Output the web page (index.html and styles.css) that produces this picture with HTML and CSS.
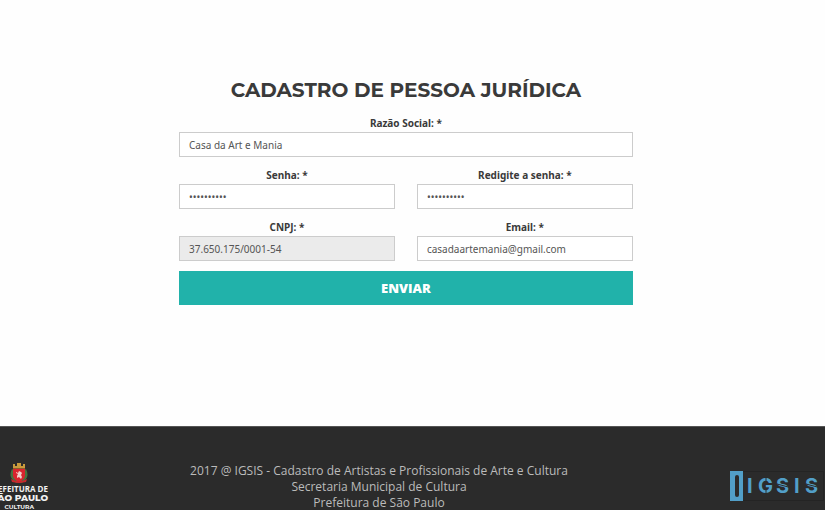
FILE: index.html
```html
<!DOCTYPE html>
<html lang="pt-BR">
<head>
<meta charset="utf-8">
<meta name="viewport" content="width=device-width, initial-scale=1">
<title>Cadastro de Pessoa Jurídica</title>
<link rel="stylesheet" href="styles.css">
</head>
<body>
<main class="content">
  <h1 class="title">CADASTRO DE PESSOA JURÍDICA</h1>
  <form class="form">
    <div class="field wide">
      <label for="razao">Razão Social: *</label>
      <input id="razao" type="text" value="Casa da Art e Mania">
    </div>
    <div class="field">
      <label for="senha">Senha: *</label>
      <input id="senha" type="password" value="abcdefghij">
    </div>
    <div class="field">
      <label for="senha2">Redigite a senha: *</label>
      <input id="senha2" type="password" value="abcdefghij">
    </div>
    <div class="field">
      <label for="cnpj">CNPJ: *</label>
      <input id="cnpj" type="text" value="37.650.175/0001-54" readonly>
    </div>
    <div class="field">
      <label for="email">Email: *</label>
      <input id="email" type="email" value="casadaartemania@gmail.com">
    </div>
    <button class="submit wide" type="submit">ENVIAR</button>
  </form>
</main>
<footer class="footer">
  <svg class="city" width="60" height="48" viewBox="0 0 60 48" role="img" aria-label="Prefeitura de São Paulo Cultura">
    <path d="M23 5V1h2v2h2V0h4v3h2V1h2v4z" fill="#c89a3c"/>
    <path d="M23 5h12v1H23z" fill="#8d5b2c"/>
    <path d="M22 6q-3 6 0 10l4 4h6l4-4q3-4 0-10l-3 2h-8z" fill="#47733f"/>
    <path d="M23 6h12v7q-1 4-6 6q-5-2-6-6z" fill="#d9252e"/>
    <path d="M26 9l2 1 1-2 2 1 1 1-1 2 1 2-1 2-2-2-2 1v-2l1-2-2-1z" fill="#f2cfc8"/>
    <path d="M21 16l5 2h6l5-2-1 3-6 1h-2l-6-1z" fill="#c5282d"/>
    <g class="city-text" text-anchor="end">
      <text class="small" x="58" y="29">PREFEITURA DE</text>
      <text class="large" x="58" y="38">SÃO PAULO</text>
      <text class="tiny" x="44" y="46">CULTURA</text>
    </g>
  </svg>
  <p class="credits">2017 @ IGSIS - Cadastro de Artistas e Profissionais de Arte e Cultura<br>Secretaria Municipal de Cultura<br>Prefeitura de São Paulo</p>
  <svg class="igsis" width="94" height="30" viewBox="0 0 94 30" role="img" aria-label="IGSIS">
    <path d="M13 0.500H93.500V29.500H13" fill="none" stroke="#242424"/>
    <path fill-rule="evenodd" d="M0 0h13v30H0zM5 6v18q0 2 2 2t2-2V6q0-2-2-2t-2 2z" fill="#529fc8"/>
    <text class="igsis-text" y="22" x="17 28 46 64 75">IGSIS</text>
    <path d="M36 6v4M36 19v5M47 13l15 4M76 13l15 4" stroke="#2b2b2b" stroke-width="1"/>
  </svg>
</footer>
</body>
</html>
```
FILE: styles.css
```css
* { box-sizing: border-box; }

body {
  margin: 0;
  min-height: 100vh;
  display: flex;
  flex-direction: column;
  background: #fefefe;
  color: #3a3a3a;
  font-family: "Noto Sans", "Open Sans", sans-serif;
  font-size: 10px;
}

.content {
  flex: 1;
  width: 100%;
  padding: 76px 23.3% 24px 21.7%;
}

.title {
  margin: 0 0 11px;
  font: 700 20px/28px Montserrat, sans-serif;
  text-align: center;
  white-space: nowrap;
}

.form {
  display: grid;
  grid-template-columns: 1fr 1fr;
  gap: 10px 22px;
}

.wide { grid-column: 1 / -1; }

.field {
  display: flex;
  flex-direction: column;
}

label {
  font-weight: 700;
  line-height: 17px;
  text-align: center;
}

input {
  width: 100%;
  height: 25px;
  padding: 0 9px;
  border: 1px solid #ccc;
  border-radius: 0;
  background: #fff;
  color: #555;
  font: inherit;
}

input[readonly] { background: #ebebeb; }

.submit {
  height: 34px;
  border: 0;
  background: #21b2aa;
  color: #fff;
  font: 800 13px/20px "Open Sans", sans-serif;
}

.footer {
  height: 84px;
  padding: 36px 0 0;
  display: grid;
  grid-template-columns: 60px 1fr 95px;
  align-items: start;
  background: #2b2b2b;
  border-top: 1px solid #555;
}

.city { margin-left: -10px; }

.city-text {
  fill: #f2f2f2;
  font-family: "Open Sans", sans-serif;
  font-weight: 700;
}

.small { font-size: 8px; }
.large { font-family: Montserrat, sans-serif; font-size: 9px; font-weight: 800; }
.tiny { font-family: Montserrat, sans-serif; font-size: 6px; }

.credits {
  margin: 0;
  padding-right: 32px;
  color: #bbb;
  font: 12px/16px "Open Sans", sans-serif;
  text-align: center;
}

.igsis { margin-top: 8px; }

.igsis-text {
  fill: #529fc8;
  font: 700 20px Inter, sans-serif;
}
```
